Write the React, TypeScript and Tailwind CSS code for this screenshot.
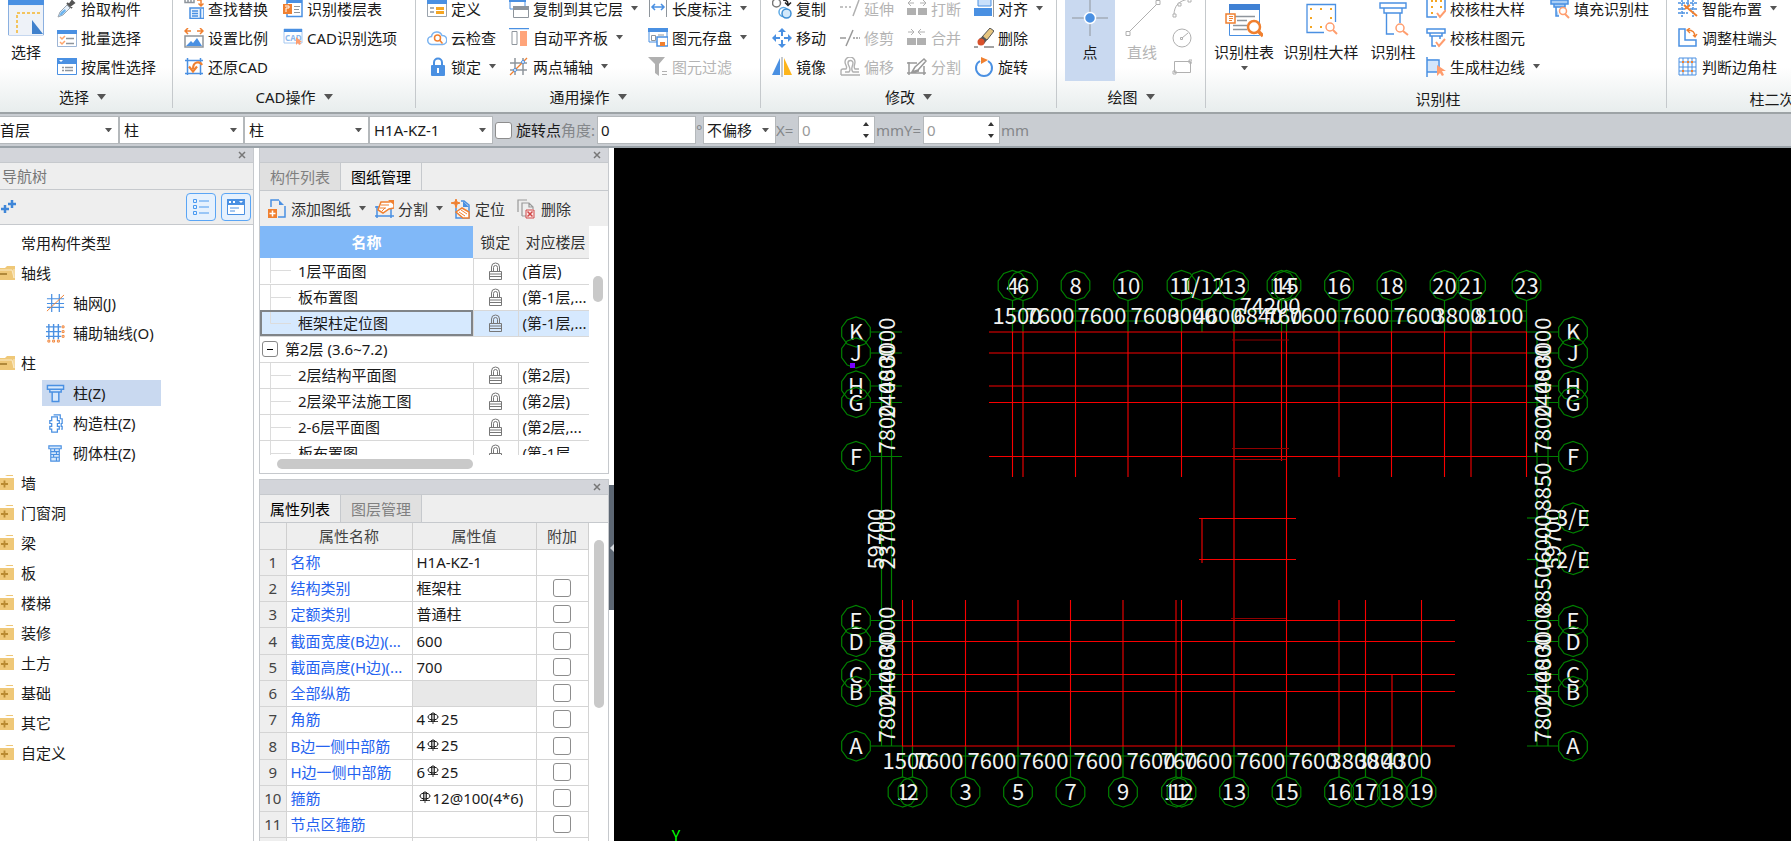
import { ReactNode } from 'react'
import clsx from 'clsx'

const BLUE = '#4a90e2'
const ORANGE = '#f08030'
const PEACH = '#ff9d6e'
const GRAY = '#b0b0b0'

/* ---------- icons ---------- */

const icons: Record<string, ReactNode> = {
  pick: (
    <>
      <path d="M1 18l2-5 7-7 3 3-7 7z" fill="#e8f1fa" stroke="#9aa5b0" />
      <path d="M2 17l2-4 4-3 1 2-4 4z" fill="#6db4ee" />
      <path d="M10 4l5 5M12 6l3-4 2 2-4 3z" fill="#555" stroke="#555" strokeWidth="2" />
    </>
  ),
  batch: (
    <>
      <path d="M.5 2.500h19v16H.5z" fill="#fff" stroke="#9db5d5" />
      <path d="M0 2h20v4H0z" fill={BLUE} />
      <path d="M3 9l2 2 3-3M3 14l2 2 3-3" fill="none" stroke="#ffa56a" strokeWidth="1.500" />
      <path d="M9 10.500h8M9 15.500h8" stroke="#8e959c" strokeWidth="1.500" />
    </>
  ),
  attr: (
    <>
      <path d="M.5 1.500h19v16H.5z" fill="#fff" stroke={BLUE} />
      <path d="M0 1h20v6H0z" fill={BLUE} />
      <path d="M2 3h4L4 5z" fill="#fff" />
      <path d="M5 10.500h2M8 10.500h8M5 13.500h2M8 13.500h8" stroke="#8e959c" strokeWidth="1.500" />
    </>
  ),
  replace: (
    <>
      <path d="M1 0v3.500h9V0M4 0v3M7 0v3" fill="none" stroke="#8e959c" strokeWidth="1.500" />
      <path d="M13 1h4v5M14.500 4.500L17 7l2.500-2.500" fill="none" stroke={ORANGE} strokeWidth="1.500" />
      <path d="M6 9h14v10.500H6z" fill="#e8f2fd" stroke={BLUE} strokeWidth="1.500" />
      <path d="M8 12h6M8 14.500h6M8 17h6M16.500 10v9" stroke={BLUE} strokeWidth="1.500" />
    </>
  ),
  scale: (
    <>
      <path d="M1 3h6M4 0L1 3l3 3M13 3h6M16 0l3 3-3 3" fill="none" stroke={ORANGE} strokeWidth="1.500" />
      <path d="M1 8h18v11H1z" fill="#fff" stroke="#8e959c" strokeWidth="1.500" />
      <path d="M2 18l5-5 2 2 4-5 5 8z" fill={BLUE} />
    </>
  ),
  restore: (
    <>
      <path d="M3.500 1v17M16.500 1v17M1 3.500h18M1 16.500h18" stroke={BLUE} strokeWidth="1.500" />
      <path d="M18 8c-2-4-9-4-9 4M5 9.500l4 5 4-5" fill="none" stroke={ORANGE} strokeWidth="2.200" />
    </>
  ),
  floorTable: (
    <>
      <path d="M4 1.500h15v16H4z" fill="#fff" stroke={BLUE} strokeWidth="1.500" />
      <path d="M4 1h15v3H4z" fill={BLUE} />
      <path d="M11 7.500h6M11 10.500h5M11 13.500h6" stroke="#8e959c" />
      <path d="M0 5h9v10H0z" fill={ORANGE} />
      <path d="M2 7h4v2H3v4" fill="none" stroke="#fff" />
    </>
  ),
  cadOption: (
    <>
      <path d="M1 1h18v14H1z" fill="#fff" stroke="#a6c8f0" />
      <path d="M1 1h18v3H1z" fill={BLUE} />
      <text x="2" y="12.500" fontSize="8" fontWeight="700" fill="#8bb7ec">CAD</text>
      <path d="M13 9v8l2-2 1 2 2-1-1-2h2z" fill={PEACH} />
    </>
  ),
  define: (
    <>
      <path d="M.5.5h19v17H.5z" fill="#fff" stroke="#9aa3ad" />
      <path d="M0 0h20v5H0z" fill={BLUE} />
      <path d="M3 9h4M3 13h4" stroke="#8e959c" strokeWidth="1.500" />
      <path d="M9 8h8v3H9zM9 12h8v3H9z" fill="#f5a623" />
    </>
  ),
  cloud: (
    <>
      <path d="M5 16.500a4 4 0 01-.5-8A5.500 5.500 0 0115 7.500a4.500 4.500 0 01.500 9z" fill="#fff" stroke="#7ab3f0" strokeWidth="1.500" />
      <circle cx="10.500" cy="10" r="3" fill="none" stroke={ORANGE} strokeWidth="1.500" />
      <path d="M12.500 12l3 3.500" stroke={ORANGE} strokeWidth="1.500" />
    </>
  ),
  lock: (
    <>
      <path d="M7 9V5.500a4 4 0 018 0V9" fill="none" stroke={BLUE} strokeWidth="2" />
      <rect x="4" y="8" width="14" height="11" rx="1" fill={BLUE} />
      <path d="M11 11v5" stroke="#fff" strokeWidth="2" />
    </>
  ),
  copyFloor: (
    <>
      <path d="M1 0h15v10H1z" fill="#fff" stroke={BLUE} />
      <path d="M0 0h17v3H0z" fill={BLUE} />
      <path d="M4.500 7.500h15v11h-15z" fill="#fff" stroke="#8e959c" />
      <path d="M4 7h16v4H4z" fill="#8e959c" />
    </>
  ),
  alignSlab: (
    <>
      <path d="M0 .5h20" stroke={BLUE} strokeWidth="1.500" />
      <path d="M3 3.500h5v13H3z" fill="#fff" stroke="#8e959c" />
      <path d="M11 3h7v15h-7z" fill="#ffa47a" />
    </>
  ),
  auxAxis: (
    <>
      <path d="M6 1v17M14 1v17M1 6h17M1 13h17" stroke="#8e959c" strokeWidth="1.500" />
      <path d="M1 18L18 1" stroke={ORANGE} strokeWidth="1.200" />
      <circle cx="6" cy="13" r="1.500" fill="#fff" stroke={BLUE} />
      <circle cx="14" cy="5" r="1.500" fill="#fff" stroke={BLUE} />
    </>
  ),
  length: (
    <>
      <path d="M1.500 0v18M18.500 0v18" stroke="#8e959c" />
      <path d="M4 8h12M7 5L4 8l3 3M13 5l3 3-3 3" fill="none" stroke={BLUE} strokeWidth="1.500" />
    </>
  ),
  saveEl: (
    <>
      <path d="M1 1h18v13H1z" fill="#fff" stroke={BLUE} />
      <path d="M0 0h20v4H0z" fill={BLUE} />
      <path d="M3.500 7.500h4v5h-4zM10 7h6" fill="none" stroke="#8e959c" />
      <path d="M9 9h11v9H9z" fill="#fff" stroke={BLUE} strokeWidth="1.500" />
      <path d="M12 14h5v4h-5z" fill={ORANGE} />
    </>
  ),
  filter: (
    <>
      <path d="M0 0h17l-6 7v12l-4-3V7z" fill={GRAY} />
      <path d="M14 14.500h5M14 17.500h5" stroke={GRAY} />
    </>
  ),
  copy: (
    <>
      <circle cx="4.500" cy="4" r="4" fill="#fff" stroke="#777" strokeWidth="1.500" />
      <path d="M11 1c3 0 5 1 5 4M13 3.500l3 3 3-3" fill="none" stroke="#222" strokeWidth="1.500" />
      <circle cx="11.500" cy="13" r="4.500" fill="#fff" stroke="#60abe6" strokeWidth="1.500" />
      <circle cx="14.500" cy="14.500" r="4.500" fill="#d2e9fb" stroke="#3f8fd4" strokeWidth="1.500" />
    </>
  ),
  move: (
    <path d="M10 0l4 4h-3v4H9V4H6zM10 20l4-4h-3v-4H9v4H6zM0 10l4-4v3h4v2H4v3zM20 10l-4-4v3h-4v2h4v3z" fill={BLUE} />
  ),
  mirror: (
    <>
      <path d="M8 1v17H0z" fill={BLUE} />
      <path d="M12 1v17h8z" fill="#fdb51c" />
      <path d="M10 0v20" stroke="#8e959c" />
    </>
  ),
  extend: <path d="M0 8h3M5 8h2M9 8h2M13 17l6-16" stroke={GRAY} strokeWidth="1.500" />,
  trim: <path d="M0 10h6M6 18l7-16M13 10h2M16 10h2M19 10h1" stroke="#999" strokeWidth="1.500" />,
  offset: (
    <path d="M1 18v-4q0-2 2-2h3c2-2-1-4-1-7a5 5 0 0110 0c0 3-2 5 0 7h4M1 18h19M5 15h4c3-3-1-6-1-9a2.500 2.500 0 015 0c0 3-3 6 0 9h6" fill="none" stroke={GRAY} strokeWidth="1.400" />
  ),
  breakOff: (
    <>
      <path d="M0 9h9v7H0zM11 9h9v7h-9z" fill={GRAY} />
      <path d="M1 4h6M4 1L1 4l3 3M13 4h6M16 1l3 3-3 3" fill="none" stroke={GRAY} />
    </>
  ),
  merge: (
    <>
      <path d="M0 10h9v7H0zM10 10h9v7h-9z" fill={GRAY} />
      <path d="M1 4h6M4 1l3 3-3 3M11 4h7M14 1l-3 3 3 3" fill="none" stroke={GRAY} />
    </>
  ),
  splitGray: (
    <path d="M0 6h10M0 16h19M2 5v13M17 9v9M5 15l3-5 9-8 2 2-8 9zM5 15l7-1" fill="none" stroke="#999" strokeWidth="1.500" />
  ),
  align: (
    <>
      <path d="M4 0h13v7H4z" fill="#c9e0fb" stroke={BLUE} />
      <path d="M0 9h18v8H0z" fill={BLUE} />
      <path d="M19.500 0v18" stroke="#999" />
    </>
  ),
  erase: (
    <>
      <path d="M8 9l8-9 4 3-7 9z" fill="#e6c57f" stroke="#555" />
      <path d="M5 11l4-3 4 4-3 4z" fill="#555" />
      <circle cx="7" cy="14" r="3.500" fill="#d9512c" />
      <path d="M0 19h4M10 19h10" stroke="#444" />
    </>
  ),
  rotate: (
    <>
      <path d="M6 4a8 8 0 108 0" fill="none" stroke={BLUE} strokeWidth="2" />
      <path d="M7 0l7 3-7 4z" fill={ORANGE} />
    </>
  ),
  arc: (
    <>
      <path d="M2 16c0-9 5-15 16-16" fill="none" stroke={GRAY} />
      <path d="M1 15h3v3H1zM6 4h3v3H6zM16 0h3v3h-3z" fill="#fff" stroke={GRAY} />
    </>
  ),
  circle: (
    <>
      <circle cx="10" cy="10" r="9" fill="none" stroke={GRAY} />
      <path d="M8.500 9.500h2v2h-2zM10 10l6-5" fill="none" stroke={GRAY} />
    </>
  ),
  rect: <path d="M2.500 4.500h16v11h-16zM1 14h3v3H1zM17 3h3v3h-3z" fill="#fff" stroke={GRAY} />,
  checkDetail: (
    <>
      <path d="M1 0v18h10M19 0v11" fill="none" stroke={BLUE} strokeWidth="1.500" />
      <path d="M5 1h2v2H5zM9 1h2v2H9zM14 1h2v2h-2zM5 7h2v2H5zM5 13h2v2H5zM14 7h2v2h-2z" fill="#f5a623" />
      <path d="M11 14l3 4 6-7" fill="none" stroke={PEACH} strokeWidth="2" />
    </>
  ),
  checkColumn: (
    <>
      <path d="M1 1h18v4H1zM4 5h12v3H4zM6 8v10h4M14 8v3" fill="none" stroke={BLUE} strokeWidth="1.500" />
      <path d="M10 14l3 4 6-7" fill="none" stroke={PEACH} strokeWidth="2" />
    </>
  ),
  edge: (
    <>
      <path d="M1 2h11v13H1z" fill="#d3e6fb" />
      <path d="M1 0v20M1 3h12v8M1 15h10" fill="none" stroke={BLUE} strokeWidth="1.500" />
      <path d="M11 8v11l3-3 2 3 2-1-2-4h4z" fill={PEACH} />
    </>
  ),
  fillColumn: (
    <>
      <path d="M1 1h17v4H1zM4 5h11v3H4zM6 8v9h3M13 8v2" fill="#a9cdf5" stroke={BLUE} strokeWidth="1.500" />
      <circle cx="13" cy="12" r="3.500" fill="#fff" stroke={PEACH} strokeWidth="1.500" />
      <path d="M15 15l4 4" stroke={PEACH} strokeWidth="2" />
    </>
  ),
  smart: (
    <>
      <path d="M4 0v18M10 0v7M15 0v18M0 4h19M0 10h7M0 14h10M12 10h7" stroke={BLUE} strokeWidth="1.500" strokeDasharray="3 1" />
      <path d="M6 6l13 11M7 10l5-4" stroke={ORANGE} strokeWidth="2" />
    </>
  ),
  adjust: (
    <>
      <path d="M1 1h6v11h11v6H1z" fill="none" stroke={BLUE} strokeWidth="1.500" />
      <path d="M10 2c5 0 7 3 7 7M12 0l-3 2 3 3M15 7l2 2 2-3" fill="none" stroke={ORANGE} strokeWidth="1.300" />
    </>
  ),
  corner: (
    <>
      <path d="M1 1h17v17H1zM5 1v17M10 1v17M14 1v17M1 5h17M1 10h17M1 14h17" fill="none" stroke={BLUE} />
      <path d="M4 4h2v2H4zM9 4h2v2H9zM4 13h2v2H4zM13 13h2v2h-2zM13 4h2v2h-2z" fill={ORANGE} />
    </>
  ),
  addSheet: (
    <>
      <path d="M4 8V1h8M18 7v11h-7" fill="none" stroke={BLUE} strokeWidth="1.500" />
      <path d="M12 1l5 5h-5z" fill={BLUE} />
      <path d="M1 10h9v9H1z" fill={ORANGE} />
      <path d="M5.500 11.500v6M2.500 14.500h6" stroke="#fff" strokeWidth="1.500" />
    </>
  ),
  split: (
    <>
      <path d="M3 7v12M17 7v12M1 8h19M1 17h19" stroke={BLUE} strokeWidth="1.500" />
      <path d="M7 3h8l5-1v7l-5 1-6 4-5-3z" fill="#fff" stroke={ORANGE} strokeWidth="1.500" />
      <path d="M7 6h8M6 9h6M8 12l3-3" stroke={ORANGE} />
      <path d="M14 1h6v5z" fill={ORANGE} />
    </>
  ),
  locate: (
    <>
      <path d="M5 9v10h13V6l-5-4h-3" fill="none" stroke={BLUE} strokeWidth="1.500" />
      <path d="M12 2l6 6h-6z" fill={BLUE} />
      <path d="M5 0l1 3 3 1-3 1-1 4-1-4-4-1 4-1z" fill={ORANGE} stroke={ORANGE} />
      <path d="M5 13l6-4 7 4v6h-6z" fill="#fff" stroke={ORANGE} strokeWidth="1.500" />
      <path d="M8 13l6 4M10 11l6 4" stroke={ORANGE} />
    </>
  ),
  removeSheet: (
    <>
      <path d="M1 13V1h9M5 17V4h7l4 4v2M12 4v4h4M5 17h4" fill="none" stroke="#999" strokeWidth="1.200" />
      <path d="M9 11h8v8H9z" fill="#fbe9e9" stroke="#d04848" />
      <path d="M10.500 12.500l5 5M15.500 12.500l-5 5" stroke="#d04848" strokeWidth="1.500" />
    </>
  ),
  grid: (
    <>
      <path d="M6 0v19M14 0v19M1 5h18M1 14h18M1 10h18" stroke={BLUE} strokeWidth="1.300" />
      <path d="M1 18L19 1" stroke={ORANGE} />
    </>
  ),
  auxGrid: (
    <>
      <path d="M3 0v16M8 0v16M13 0v16M0 3h16M0 8h16M0 13h16" stroke={BLUE} strokeWidth="1.500" />
      <path d="M17 2h2v2h-2zM17 7h2v2h-2zM17 12h2v2h-2zM2 17h2v2H2zM7 17h2v2H7zM12 17h2v2h-2z" fill="#fff" stroke={ORANGE} />
    </>
  ),
  column: <path d="M1.500 1.500h17v4h-17zM4 5.500h12v3H4zM6.500 8.500h7v10h-7z" fill="#d7e8fb" stroke={BLUE} strokeWidth="1.500" />,
  structColumn: (
    <path d="M6 3h6v4h2v3h-2v3h2v3h-2v3H6v-3H4v-3h2v-3H4V7h2zM8 1h7v4h2v5h-1v3h1v3h-1" fill="none" stroke={BLUE} strokeWidth="1.300" />
  ),
  brickColumn: (
    <path d="M3 2h13v3H3zM5 5h9v13H5zM5 8h9M5 11h9M5 14h9M9 5v3M11 8v3M8 11v3M11 14v4" fill="#d7e8fb" stroke={BLUE} strokeWidth="1.200" />
  ),
}

function Icon({ name, className = 'size-5' }: { name: string; className?: string }) {
  return (
    <svg viewBox="0 0 20 20" className={clsx('shrink-0', className)} aria-hidden="true">
      {icons[name]}
    </svg>
  )
}

function Caret({ className = 'w-[7px]' }: { className?: string }) {
  return (
    <svg viewBox="0 0 8 5" className={clsx('shrink-0', className)} aria-hidden="true">
      <path d="M0 0h8L4 5z" fill="#555" />
    </svg>
  )
}

/* ---------- ribbon ---------- */

interface ToolProps {
  icon: string
  label: string
  menu?: boolean
  disabled?: boolean
}

function Tool({ icon, label, menu, disabled }: ToolProps) {
  return (
    <button
      disabled={disabled}
      className="flex h-[29px] items-center gap-1 whitespace-nowrap text-left disabled:text-[#b4b4b4]"
    >
      <Icon name={icon} />
      <span>{label}</span>
      {menu && <Caret className="ml-1 w-[7px]" />}
    </button>
  )
}

function ToolColumn({ tools, className }: { tools: ToolProps[]; className?: string }) {
  return (
    <div className={clsx('-mt-[6px] flex shrink-0 flex-col items-start', className)}>
      {tools.map((t) => (
        <Tool key={t.label} {...t} />
      ))}
    </div>
  )
}

interface GroupProps {
  label: string
  className: string
  inset?: string
  menu?: boolean
  children: ReactNode
}

function Group({ label, className, inset, menu = true, children }: GroupProps) {
  return (
    <section className={clsx('flex shrink-0 flex-col', className)}>
      <div className={clsx('flex h-[81px] shrink-0', inset)}>{children}</div>
      <div className={clsx('flex shrink-0 items-center justify-center gap-2', menu ? 'h-8' : 'h-9')}>
        {label}
        {menu && <Caret className="w-[9px]" />}
      </div>
    </section>
  )
}

function Divider() {
  return <div className="mb-1 w-px shrink-0 bg-[#c5c9cc]" />
}

interface BigToolProps {
  label: string
  className: string
  menu?: boolean
  children: ReactNode
}

function BigTool({ label, className, menu, children }: BigToolProps) {
  return (
    <button className={clsx('flex h-full shrink-0 flex-col items-center whitespace-nowrap', className)}>
      {children}
      <span className="mt-1">{label}</span>
      {menu && <Caret className="mt-1 w-[7px]" />}
    </button>
  )
}

function Ribbon() {
  return (
    <header className="flex h-[114px] shrink-0 overflow-hidden border-b-2 border-[#9da3a6] bg-linear-to-b from-white from-60% to-[#e8eded]">
      <Group label="选择" className="w-[172px] pr-[7px]">
        <BigTool label="选择" className="w-[52px]">
          <svg viewBox="0 0 38 38" className="size-[38px]" aria-hidden="true">
            <path d="M1.500 0h35v35h-35z" fill="#e9eef6" stroke="#8bb0e0" />
            <path d="M1 0h36v5H1z" fill={BLUE} />
            <path d="M2 6h34v29H2z" fill="#eef2f8" />
            <path d="M10 33V13h23" fill="none" stroke="#f5b52c" strokeWidth="1.500" strokeDasharray="3 2" />
            <path d="M25 20v14h11z" fill="#4081cc" />
          </svg>
        </BigTool>
        <ToolColumn
          className="ml-[5px]"
          tools={[
            { icon: 'pick', label: '拾取构件' },
            { icon: 'batch', label: '批量选择' },
            { icon: 'attr', label: '按属性选择' },
          ]}
        />
      </Group>
      <Divider />
      <Group label="CAD操作" className="w-[242px]" inset="pl-[11px]">
        <ToolColumn
          className="w-[99px]"
          tools={[
            { icon: 'replace', label: '查找替换' },
            { icon: 'scale', label: '设置比例' },
            { icon: 'restore', label: '还原CAD' },
          ]}
        />
        <ToolColumn
          tools={[
            { icon: 'floorTable', label: '识别楼层表' },
            { icon: 'cadOption', label: 'CAD识别选项' },
          ]}
        />
      </Group>
      <Divider />
      <Group label="通用操作" className="w-[344px]" inset="pl-[11px]">
        <ToolColumn
          className="w-[82px]"
          tools={[
            { icon: 'define', label: '定义' },
            { icon: 'cloud', label: '云检查' },
            { icon: 'lock', label: '锁定', menu: true },
          ]}
        />
        <ToolColumn
          className="w-[139px]"
          tools={[
            { icon: 'copyFloor', label: '复制到其它层', menu: true },
            { icon: 'alignSlab', label: '自动平齐板', menu: true },
            { icon: 'auxAxis', label: '两点辅轴', menu: true },
          ]}
        />
        <ToolColumn
          tools={[
            { icon: 'length', label: '长度标注', menu: true },
            { icon: 'saveEl', label: '图元存盘', menu: true },
            { icon: 'filter', label: '图元过滤', disabled: true },
          ]}
        />
      </Group>
      <Divider />
      <Group label="修改" className="w-[295px]" inset="pl-[11px]">
        <ToolColumn
          className="w-[68px]"
          tools={[
            { icon: 'copy', label: '复制' },
            { icon: 'move', label: '移动' },
            { icon: 'mirror', label: '镜像' },
          ]}
        />
        <ToolColumn
          className="w-[67px]"
          tools={[
            { icon: 'extend', label: '延伸', disabled: true },
            { icon: 'trim', label: '修剪', disabled: true },
            { icon: 'offset', label: '偏移', disabled: true },
          ]}
        />
        <ToolColumn
          className="w-[67px]"
          tools={[
            { icon: 'breakOff', label: '打断', disabled: true },
            { icon: 'merge', label: '合并', disabled: true },
            { icon: 'splitGray', label: '分割', disabled: true },
          ]}
        />
        <ToolColumn
          tools={[
            { icon: 'align', label: '对齐', menu: true },
            { icon: 'erase', label: '删除' },
            { icon: 'rotate', label: '旋转' },
          ]}
        />
      </Group>
      <Divider />
      <Group label="绘图" className="w-[148px]" inset="pl-2">
        <BigTool label="点" className="w-[50px] bg-[#c9d9f0]">
          <svg viewBox="0 0 38 38" className="size-[38px]" aria-hidden="true">
            <path d="M19 0v36M1 18h36" stroke="#8f959b" />
            <circle cx="19" cy="18" r="5.500" fill={BLUE} stroke="#fff" strokeWidth="1.500" />
          </svg>
        </BigTool>
        <BigTool label="直线" className="ml-[2px] w-[50px] text-[#b4b4b4]">
          <svg viewBox="0 0 38 38" className="size-[38px]" aria-hidden="true">
            <path d="M5 33L35 3" stroke={GRAY} />
            <path d="M3 31.500h4v4H3zM33 .5h4v4h-4z" fill="#fff" stroke={GRAY} />
          </svg>
        </BigTool>
        <div className="-mt-[6px] ml-[5px] flex flex-col">
          {['arc', 'circle', 'rect'].map((name) => (
            <button key={name} aria-label={name} className="flex h-[29px] items-center">
              <Icon name={name} />
            </button>
          ))}
        </div>
      </Group>
      <Divider />
      <Group label="识别柱" menu={false} className="w-[460px] pl-1">
        <BigTool label="识别柱表" menu className="w-[68px]">
          <svg viewBox="0 0 38 38" className="size-[38px]" aria-hidden="true">
            <path d="M4.500 4.500h30v31h-30z" fill="#fff" stroke={BLUE} />
            <path d="M4 4h31v6H4z" fill="#4081d4" />
            <path d="M8 16.500h22M12 20.500h10M8 25.500h14M8 29.500h14" stroke="#8e959c" strokeWidth="1.500" />
            <path d="M1 14h9v9H1z" fill="#fff" stroke={ORANGE} strokeWidth="1.500" />
            <path d="M4 18.500h4M4 16.500h4M4 20.500h3" stroke={ORANGE} />
            <circle cx="29" cy="27" r="6" fill="#fff" stroke={ORANGE} strokeWidth="2.500" />
            <path d="M33 31l5 5" stroke={ORANGE} strokeWidth="3.500" />
          </svg>
        </BigTool>
        <BigTool label="识别柱大样" className="ml-[3px] w-[80px]">
          <svg viewBox="0 0 38 38" className="size-[38px]" aria-hidden="true">
            <path d="M33.500 22V4.500H5v28h17" fill="none" stroke={BLUE} strokeWidth="1.300" />
            <path d="M8 8h2v2H8zM18 8h2v2h-2zM28 8h2v2h-2zM8 17h2v2H8zM28 17h2v2h-2zM8 26h2v2H8zM18 26h2v2h-2z" fill="#f5a623" />
            <circle cx="28" cy="27" r="4" fill="#fff" stroke={PEACH} strokeWidth="1.500" />
            <path d="M31 30l4 4" stroke={PEACH} strokeWidth="2" />
          </svg>
        </BigTool>
        <BigTool label="识别柱" className="ml-[5px] w-[54px]">
          <svg viewBox="0 0 38 38" className="size-[38px]" aria-hidden="true">
            <path d="M6 3h26v5H6zM10 8h18v5H10zM12.500 13v21H20M26 13v10" fill="none" stroke={BLUE} strokeWidth="1.400" />
            <circle cx="26" cy="28" r="4" fill="#fff" stroke={PEACH} strokeWidth="1.500" />
            <path d="M29 31l5 4" stroke={PEACH} strokeWidth="2" />
          </svg>
        </BigTool>
        <ToolColumn
          className="ml-[6px] w-[124px]"
          tools={[
            { icon: 'checkDetail', label: '校核柱大样' },
            { icon: 'checkColumn', label: '校核柱图元' },
            { icon: 'edge', label: '生成柱边线', menu: true },
          ]}
        />
        <ToolColumn tools={[{ icon: 'fillColumn', label: '填充识别柱' }]} />
      </Group>
      <Divider />
      <Group label="柱二次编辑" menu={false} className="w-[240px]" inset="pl-[11px]">
        <ToolColumn
          tools={[
            { icon: 'smart', label: '智能布置', menu: true },
            { icon: 'adjust', label: '调整柱端头' },
            { icon: 'corner', label: '判断边角柱' },
          ]}
        />
      </Group>
    </header>
  )
}

/* ---------- option bar ---------- */

function Picker({ name, value, className }: { name: string; value: string; className: string }) {
  return (
    <span className={clsx('relative flex h-7 shrink-0 items-center border border-[#b4b8bb] bg-white', className)}>
      <select aria-label={name} className="h-full w-full appearance-none bg-transparent pr-5 outline-none" defaultValue={value}>
        <option>{value}</option>
      </select>
      <Caret className="pointer-events-none absolute right-[6px] w-[7px]" />
    </span>
  )
}

function Spinner({ id }: { id: string }) {
  return (
    <span className="flex h-7 w-[77px] shrink-0 items-center border border-[#b4b8bb] bg-white pr-1 pl-[3px]">
      <input id={id} defaultValue="0" className="w-full min-w-0 flex-1 text-[#9a9a9a] outline-none" />
      <svg viewBox="0 0 8 18" className="h-[18px] w-2 shrink-0" aria-hidden="true">
        <path d="M1 5h6L4 1zM1 13h6l-3 4z" fill="#333" />
      </svg>
    </span>
  )
}

function OptionBar() {
  return (
    <div className="flex h-[34px] shrink-0 items-center border-b-2 border-[#9aa2a8] bg-[#c9cdd2]">
      <Picker name="楼层" value="首层" className="w-[119px] border-l-0" />
      <Picker name="构件大类" value="柱" className="w-[125px] pl-1" />
      <Picker name="构件类型" value="柱" className="w-[125px] pl-1" />
      <Picker name="构件" value="H1A-KZ-1" className="w-[124px] pl-1" />
      <input id="rotate" type="checkbox" className="ml-[2px] size-[17px] shrink-0 appearance-none rounded-[3px] border border-[#8d8d8d] bg-white" />
      <label htmlFor="rotate" className="ml-1 shrink-0">旋转点</label>
      <label htmlFor="angle" className="w-9 shrink-0 text-[#84878a]">角度:</label>
      <input id="angle" defaultValue="0" className="h-7 w-[99px] shrink-0 border border-[#b4b8bb] bg-white px-[3px] outline-none" />
      <span className="w-[7px] shrink-0 text-[#84878a]">°</span>
      <Picker name="偏移" value="不偏移" className="w-[73px] pl-[3px]" />
      <label htmlFor="dx" className="w-[22px] shrink-0 text-[#84878a]">X=</label>
      <Spinner id="dx" />
      <label htmlFor="dy" className="w-12 shrink-0 pl-px text-[#84878a]">mmY=</label>
      <Spinner id="dy" />
      <span className="pl-px text-[#84878a]">mm</span>
    </div>
  )
}

/* ---------- side panels ---------- */

function PanelStrip() {
  return (
    <div className="flex h-[15px] shrink-0 items-center justify-end border-b border-[#c6c9cd] bg-[#d3d5da] pr-[7px]">
      <button aria-label="关闭">
        <svg viewBox="0 0 8 8" className="size-2" aria-hidden="true">
          <path d="M1 1l6 6M7 1L1 7" stroke="#777" strokeWidth="1.500" />
        </svg>
      </button>
    </div>
  )
}

function Folder({ open }: { open?: boolean }) {
  return (
    <svg viewBox="0 0 15 18" className="h-[18px] w-[15px] shrink-0" aria-hidden="true">
      {open ? (
        <>
          <path d="M0 4h5l2-2h8v14H0z" fill="#efc878" />
          <path d="M0 6h12l2 8V5" fill="none" stroke="#fbeac5" />
          <path d="M0 10h7" stroke="#9c7526" strokeWidth="1.500" />
        </>
      ) : (
        <>
          <path d="M5 2l2-1h6v1H5z" fill="#efc878" />
          <path d="M0 4h14v12H0z" fill="#efc878" />
          <path d="M1 10h7M4.500 6.500v7" stroke="#b98a30" strokeWidth="1.800" />
        </>
      )}
    </svg>
  )
}

const tree = [
  { label: '轴线', items: [{ icon: 'grid', label: '轴网(J)' }, { icon: 'auxGrid', label: '辅助轴线(O)' }] },
  {
    label: '柱',
    items: [
      { icon: 'column', label: '柱(Z)', active: true },
      { icon: 'structColumn', label: '构造柱(Z)' },
      { icon: 'brickColumn', label: '砌体柱(Z)' },
    ],
  },
  ...['墙', '门窗洞', '梁', '板', '楼梯', '装修', '土方', '基础', '其它', '自定义'].map((label) => ({ label, items: [] })),
] as { label: string; items: { icon: string; label: string; active?: boolean }[] }[]

function NavTree() {
  return (
    <aside className="flex w-[254px] shrink-0 flex-col border-r border-[#c6c9cd]">
      <PanelStrip />
      <h2 className="flex h-[27px] shrink-0 items-center border-b border-[#c6c9cd] bg-[#eee] pl-[2px] text-[#777]">导航树</h2>
      <div className="flex h-[35px] shrink-0 items-center border-b border-[#c6c9cd] bg-[#eee] pr-[2px]">
        <svg viewBox="0 0 17 16" className="h-4 w-[17px]" aria-hidden="true">
          <path d="M1 10h8M5 6v8M8 5h8M12 1v8" stroke="#3f86d8" strokeWidth="2.500" />
        </svg>
        <button aria-label="列表" className="ml-auto flex h-7 w-[30px] items-center justify-center rounded-sm border border-[#5aa5f5] bg-[#e6f1fd]">
          <svg viewBox="0 0 18 18" className="size-[18px]" aria-hidden="true">
            <path d="M1.500 1.500h3v3h-3zM1.500 7.500h3v3h-3zM1.500 13.500h3v3h-3zM7 3h10M7 9h10M7 15h10" fill="none" stroke="#4a9af0" />
          </svg>
        </button>
        <button aria-label="面板" className="ml-[5px] flex h-7 w-[30px] items-center justify-center rounded-sm border border-[#5aa5f5] bg-[#e6f1fd]">
          <svg viewBox="0 0 20 18" className="h-[18px] w-5" aria-hidden="true">
            <path d="M1.500 1.500h17v15h-17z" fill="#fff" stroke={BLUE} />
            <path d="M1 1h18v6H1z" fill={BLUE} />
            <path d="M3 3h2v2H3zM7 3h2v2H7zM13 3h4l-2 2z" fill="#fff" />
            <path d="M4 10h9M4 13h5" stroke={BLUE} />
          </svg>
        </button>
      </div>
      <ul className="min-h-0 flex-1 overflow-hidden bg-white pt-[3px]">
        <li className="flex h-[30px] items-center pl-[21px]">常用构件类型</li>
        {tree.map((node) => (
          <li key={node.label}>
            <div className="flex h-[30px] items-center gap-[6px]">
              <Folder open={node.items.length > 0} />
              {node.label}
            </div>
            {node.items.length > 0 && (
              <ul>
                {node.items.map((item) => (
                  <li key={item.label} className="flex h-[30px] items-center pl-[42px]">
                    <button className={clsx('flex h-[26px] w-[119px] items-center gap-2 pl-1', item.active && 'bg-[#c9d9f0]')}>
                      <Icon name={item.icon} className="size-[19px]" />
                      {item.label}
                    </button>
                  </li>
                ))}
              </ul>
            )}
          </li>
        ))}
      </ul>
    </aside>
  )
}

function Tabs({ tabs, active }: { tabs: string[]; active: string }) {
  return (
    <div role="tablist" className="flex h-7 shrink-0 border-b border-[#c6c9cd] bg-[#eee]">
      {tabs.map((t) => (
        <button
          key={t}
          role="tab"
          aria-selected={t === active}
          className={clsx(
            'w-[81px] border-r border-[#c6c9cd]',
            t === active ? 'text-black' : 'bg-[#e0e0e0] text-[#808080]'
          )}
        >
          {t}
        </button>
      ))}
    </div>
  )
}

const sheets = [
  { name: '1层平面图', floor: '(首层)' },
  { name: '板布置图', floor: '(第-1层,...' },
  { name: '框架柱定位图', floor: '(第-1层,...', active: true },
  { name: '第2层 (3.6~7.2)', group: true },
  { name: '2层结构平面图', floor: '(第2层)' },
  { name: '2层梁平法施工图', floor: '(第2层)' },
  { name: '2-6层平面图', floor: '(第2层,...' },
  { name: '板布置图', floor: '(第-1层,...' },
]

function Padlock() {
  return (
    <svg viewBox="0 0 15 18" className="mx-auto h-[18px] w-[15px]" aria-hidden="true">
      <path d="M3.500 9V5a4 4 0 018 0v4M5.500 9V5.500a2 2 0 014 0V9" fill="none" stroke="#777" />
      <path d="M1.500 9.500h12v8h-12zM1.500 12h12M1.500 14.500h12" fill="none" stroke="#777" />
    </svg>
  )
}

function SheetPanel() {
  return (
    <section className="flex h-[326px] shrink-0 flex-col overflow-hidden border border-t-0 border-[#c6c9cd]">
      <PanelStrip />
      <Tabs tabs={['构件列表', '图纸管理']} active="图纸管理" />
      <div className="flex h-[35px] shrink-0 items-center bg-[#eee] pl-[7px] text-[#333]">
        <button className="flex items-center gap-1"><Icon name="addSheet" />添加图纸<Caret className="ml-1 w-[7px]" /></button>
        <button className="ml-2 flex items-center gap-1"><Icon name="split" />分割<Caret className="ml-1 w-[7px]" /></button>
        <button className="ml-2 flex items-center gap-1"><Icon name="locate" />定位</button>
        <button className="ml-3 flex items-center gap-1"><Icon name="removeSheet" />删除</button>
      </div>
      <div className="flex h-[229px] shrink-0">
        <div className="h-full w-[329px] overflow-hidden">
          <table className="w-full table-fixed border-collapse text-left">
            <thead>
              <tr className="h-8 bg-[#eee] text-[#333]">
                <th className="w-[213px] bg-[#80b8f8] text-center font-bold text-white">名称</th>
                <th className="w-[45px] border-r border-b border-[#d2d2d2] text-center font-normal">锁定</th>
                <th className="border-b border-[#d2d2d2] p-0 pl-[7px] font-normal whitespace-nowrap">对应楼层</th>
              </tr>
            </thead>
            <tbody>
              {sheets.map((s, i) =>
                s.group ? (
                  <tr key={i} className="h-[26px] border-b border-[#d8d8d8]">
                    <td colSpan={3} className="p-0">
                      <div className="flex items-center gap-[7px] pl-[2px]">
                        <button aria-label="折叠" className="flex size-4 items-center justify-center rounded-[3px] border border-[#888] leading-none">
                          <span className="h-px w-[6px] bg-black" />
                        </button>
                        {s.name}
                      </div>
                    </td>
                  </tr>
                ) : (
                  <tr key={i} className={clsx('h-[26px] border-b border-[#d8d8d8]', s.active && 'bg-[#d6e9fe]')}>
                    <td className={clsx('border-r border-[#d8d8d8] p-0', s.active && 'outline-2 -outline-offset-2 outline-[#808488]')}>
                      <div className="flex h-[25px] items-center gap-[7px] pl-[10px]">
                        <svg viewBox="0 0 21 25" className="h-[25px] w-[21px] shrink-0" aria-hidden="true">
                          <path d={s.active ? 'M.5 0v12.500H21' : 'M.5 0v25M.5 12.500H21'} fill="none" stroke="#dcdcdc" />
                        </svg>
                        {s.name}
                      </div>
                    </td>
                    <td className="border-r border-[#d8d8d8] p-0"><Padlock /></td>
                    <td className="p-0 pl-1 whitespace-nowrap">{s.floor}</td>
                  </tr>
                )
              )}
            </tbody>
          </table>
        </div>
        <div className="pt-[50px] pl-1">
          <div className="h-[26px] w-[10px] rounded-full bg-[#c9c9c9]" />
        </div>
      </div>
      <div className="flex flex-1 items-center pl-[17px]">
        <div className="h-[10px] w-[196px] rounded-full bg-[#c9c9c9]" />
      </div>
    </section>
  )
}

const props = [
  { name: '名称', value: 'H1A-KZ-1', noExtra: true },
  { name: '结构类别', value: '框架柱' },
  { name: '定额类别', value: '普通柱' },
  { name: '截面宽度(B边)(...', value: '600' },
  { name: '截面高度(H边)(...', value: '700' },
  { name: '全部纵筋', value: '', readOnly: true },
  { name: '角筋', value: '4φ25' },
  { name: 'B边一侧中部筋', value: '4φ25' },
  { name: 'H边一侧中部筋', value: '6φ25' },
  { name: '箍筋', value: 'φ12@100(4*6)' },
  { name: '节点区箍筋', value: '' },
  { name: '', value: '' },
]

// grade III rebar mark
function Rebar() {
  return (
    <svg viewBox="0 0 12 12" className="mx-[2px] mb-[5px] inline-block size-3" aria-label="HRB400">
      <ellipse cx="6" cy="5" rx="5" ry="3" fill="none" stroke="#111" />
      <path d="M4.500 1v9M7.500 1v9M1 9.500h10M6 0v12" fill="none" stroke="#111" strokeWidth=".8" />
    </svg>
  )
}

function PropValue({ text }: { text: string }) {
  if (!text.includes('φ')) return <>{text}</>
  const [count, size] = text.split('φ')
  return <>{count}<Rebar />{size}</>
}

function PropertyPanel() {
  return (
    <section className="mt-[5px] flex min-h-0 flex-1 flex-col overflow-hidden border border-b-0 border-[#c6c9cd]">
      <PanelStrip />
      <Tabs tabs={['属性列表', '图层管理']} active="属性列表" />
      <div className="flex min-h-0 flex-1 overflow-hidden">
        <table className="h-fit w-[328px] shrink-0 table-fixed border-collapse">
          <thead>
            <tr className="h-[26px] bg-[#eee] text-[#444] [&>th]:border-r [&>th]:border-b [&>th]:border-[#cfcfcf] [&>th]:p-0 [&>th]:font-normal">
              <th className="w-[26px]" />
              <th className="w-[126px]">属性名称</th>
              <th className="w-[124px]">属性值</th>
              <th className="w-[52px]">附加</th>
            </tr>
          </thead>
          <tbody>
            {props.map((p, i) => (
              <tr key={i} className="h-[26px] nth-[4n]:h-[27px] [&>td]:border-r [&>td]:border-b [&>td]:border-[#d4d4d4] [&>td]:p-0">
                <td className="bg-[#eee] text-center text-[#444]">{i + 1}</td>
                <td className="whitespace-nowrap text-[#2563f0]"><span className="pl-1">{p.name}</span></td>
                <td className={clsx('whitespace-nowrap', p.readOnly && 'bg-[#e8e8e8]')}>
                  <span className="pl-1"><PropValue text={p.value} /></span>
                </td>
                <td>
                  {!p.noExtra && (
                    <input
                      type="checkbox"
                      aria-label={`附加 ${p.name}`}
                      className="mx-auto block size-[18px] appearance-none rounded-[3px] border border-[#8d8d8d] bg-white"
                    />
                  )}
                </td>
              </tr>
            ))}
          </tbody>
        </table>
        <div className="pt-[17px] pl-[5px]">
          <div className="h-[168px] w-[10px] rounded-full bg-[#c9c9c9]" />
        </div>
      </div>
    </section>
  )
}

/* ---------- drawing ---------- */

type Mark = [string, number]

const topAxes: Mark[] = [
  ['4', 1012.5], ['6', 1023], ['8', 1075.5], ['10', 1128], ['11', 1181.5], ['1/12', 1202], ['13', 1234],
  ['14', 1281.5], ['15', 1286.5], ['16', 1339], ['18', 1391.5], ['20', 1444.5], ['21', 1471], ['23', 1526.5],
]
const topDims: Mark[] = [
  ['1500', 1017], ['7600', 1050], ['7600', 1102], ['7600', 1155], ['3000', 1192], ['4600', 1218], ['6840', 1258],
  ['760', 1284], ['7600', 1313], ['7600', 1365], ['7600', 1418], ['3800', 1458], ['8100', 1499],
]
const bottomAxes: Mark[] = [
  ['1', 902.5], ['2', 912.5], ['3', 965.5], ['5', 1018], ['7', 1070.5], ['9', 1123], ['11', 1176],
  ['12', 1181.5], ['13', 1234], ['15', 1286.5], ['16', 1339], ['17', 1365.5], ['18', 1392], ['19', 1421.5],
]
const bottomDims: Mark[] = [
  ['1500', 907], ['7600', 939], ['7600', 992], ['7600', 1044], ['7600', 1098], ['7600', 1151], ['760', 1179],
  ['7600', 1208], ['7600', 1261], ['7600', 1313], ['3800', 1354], ['3800', 1380], ['4300', 1407],
]
const upperRows: Mark[] = [['K', 332], ['J', 353], ['H', 386], ['G', 402.5], ['F', 456.5]]
const lowerRows: Mark[] = [['E', 620.5], ['D', 641.5], ['C', 674.5], ['B', 691.5], ['A', 746]]
const middleRows: Mark[] = [['3/E', 518], ['2/E', 559.5]]
const sideDims: Mark[] = [
  ['3000', 342], ['4800', 369], ['2400', 394], ['7800', 429], ['3000', 631], ['4800', 658], ['2400', 683], ['7800', 718],
]

function Bubble({ x, y, label }: { x: number; y: number; label: string }) {
  const points = Array.from({ length: 10 }, (_, i) => {
    const a = (i * Math.PI) / 5 + Math.PI / 2
    return `${(x + 15 * Math.cos(a)).toFixed(1)},${(y + 15 * Math.sin(a)).toFixed(1)}`
  }).join(' ')
  return (
    <>
      <polygon points={points} fill="none" stroke="#008000" strokeWidth="1.200" />
      <text x={x} y={y + 8} fill="#f2f2f2" textAnchor="middle">{label}</text>
    </>
  )
}

function SideText({ x, y, label }: { x: number; y: number; label: string }) {
  return <text transform={`translate(${x} ${y}) rotate(-90)`} textAnchor="middle">{label}</text>
}

function Drawing() {
  return (
    <svg
      viewBox="614 148 1177 693"
      preserveAspectRatio="xMinYMin slice"
      className="h-full w-full font-['Noto_Sans_CJK_SC',sans-serif] text-[22px]"
      role="img"
      aria-label="轴网"
    >
      <g stroke="#008000" fill="none" strokeWidth="1.200">
        {topAxes.map(([n, x]) => <path key={n} d={`M${x} 300V332`} />)}
        {bottomAxes.map(([n, x]) => <path key={n} d={`M${x} 746V777`} />)}
        {[...upperRows, ...lowerRows].map(([n, y]) => <path key={n} d={`M871 ${y}H902M1527 ${y}H1558`} />)}
        {middleRows.map(([n, y]) => <path key={n} d={`M1527 ${y}H1558`} />)}
        <path d="M1012 311H1527M1012 321H1527M902 756H1422M881.500 332V746M891.500 332V746M1537 332V746M1548 332V746" />
      </g>
      <g stroke="#f80000" fill="none" strokeWidth="1.100">
        {topAxes
          .filter(([n]) => !['1/12', '13', '14', '15'].includes(n))
          .map(([n, x]) => <path key={n} d={`M${x} 332V477`} />)}
        {bottomAxes.map(([n, x]) => <path key={n} d={`M${x} ${n === '18' ? 675 : 600}V746`} />)}
        {upperRows.map(([n, y]) => <path key={n} d={`M989 ${y}H1527`} />)}
        {lowerRows.map(([n, y]) => <path key={n} d={`M902 ${y}H1455`} />)}
        <path d="M1281.500 332V461M1234 332V600M1286.500 332V600" />
        <path d="M1199 518.500H1296M1199 559.500H1296M1202 518V563" />
      </g>
      <path d="M1232 340H1289M1232 448.500H1289M1234 459.500H1286M1231 618.500H1286" stroke="#900000" />
      <g fill="#f2f2f2">
        {topDims.map(([t, x]) => <text key={x} x={x} y="324" textAnchor="middle">{t}</text>)}
        {bottomDims.map(([t, x]) => <text key={x} x={x} y="769" textAnchor="middle">{t}</text>)}
        <text x="1270" y="314" textAnchor="middle">74200</text>
        {sideDims.map(([t, y]) => <SideText key={y} x={895} y={y} label={t} />)}
        {sideDims.map(([t, y]) => <SideText key={y} x={1551} y={y} label={t} />)}
        <SideText x={895} y={539} label="23700" />
        <SideText x={884} y={539} label="59700" />
        <SideText x={1551} y={487} label="8850" />
        <SideText x={1551} y={539} label="6000" />
        <SideText x={1551} y={590} label="8850" />
        <SideText x={1561} y={539} label="59700" />
      </g>
      {topAxes.map(([n, x]) => <Bubble key={n} x={x} y={285.5} label={n} />)}
      {bottomAxes.map(([n, x]) => <Bubble key={n} x={x} y={792} label={n} />)}
      {[...upperRows, ...lowerRows].map(([n, y]) => <Bubble key={n} x={856} y={y} label={n} />)}
      {[...upperRows, ...middleRows, ...lowerRows].map(([n, y]) => <Bubble key={n} x={1573} y={y} label={n} />)}
      <path d="M850 363h5v5h-5z" fill="#7a00ff" />
      <text x="676" y="842" fill="#00ff00" fontSize="16" textAnchor="middle">Y</text>
    </svg>
  )
}

export default function App() {
  return (
    <div className="flex h-screen flex-col overflow-hidden bg-white font-['Noto_Sans','Noto_Sans_CJK_SC',sans-serif] text-[15px] leading-5 text-[#1a1a1a]">
      <Ribbon />
      <OptionBar />
      <main className="flex min-h-0 flex-1">
        <NavTree />
        <div className="ml-[5px] flex w-[350px] shrink-0 flex-col">
          <SheetPanel />
          <PropertyPanel />
        </div>
        <div className="flex w-[5px] shrink-0 flex-col pt-[337px]">
          <button aria-label="收起" className="flex h-[125px] items-center justify-center bg-[#5d6773]">
            <svg viewBox="0 0 4 8" className="h-2 w-1" aria-hidden="true">
              <path d="M4 0v8L0 4z" fill="#d5d9dd" />
            </svg>
          </button>
        </div>
        <div className="min-w-0 flex-1 overflow-hidden bg-black">
          <Drawing />
        </div>
      </main>
    </div>
  )
}
